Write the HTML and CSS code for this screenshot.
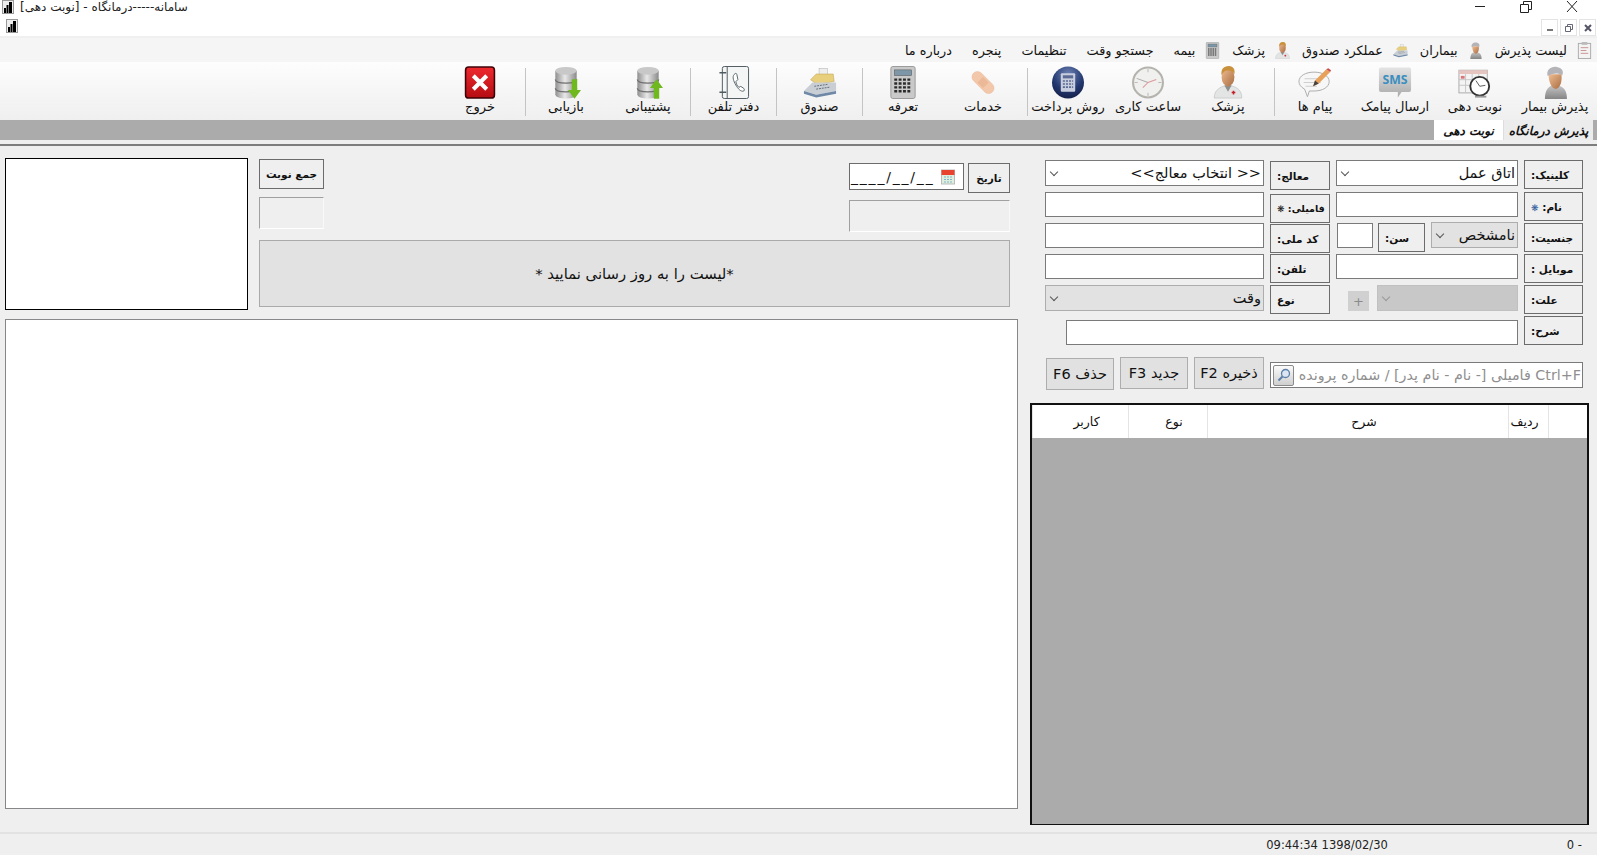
FILE: index.html
```html
<!DOCTYPE html>
<html lang="fa" dir="rtl">
<head>
    <meta charset="UTF-8">
    <title>سامانه-----درمانگاه - [نوبت دهی]</title>
    <link rel="stylesheet" href="styles.css">
</head>
<body>

<!-- shared icons -->
<svg class="sprite" xmlns="http://www.w3.org/2000/svg">
    <defs>
        <linearGradient id="gSkin" x1="0" y1="0" x2="1" y2="1"><stop offset="0" stop-color="#f0bd92"/><stop offset="1" stop-color="#a96c42"/></linearGradient>
        <linearGradient id="gGray" x1="0" y1="0" x2="0" y2="1"><stop offset="0" stop-color="#c6c6c6"/><stop offset="1" stop-color="#858585"/></linearGradient>
        <linearGradient id="gBubble" x1="0" y1="0" x2="0" y2="1"><stop offset="0" stop-color="#e4e4e4"/><stop offset="1" stop-color="#a9a9a9"/></linearGradient>
        <linearGradient id="gDb" x1="0" y1="0" x2="1" y2="0"><stop offset="0" stop-color="#8f8f8f"/><stop offset=".45" stop-color="#e8e8e8"/><stop offset="1" stop-color="#8a8a8a"/></linearGradient>
        <radialGradient id="gBall" cx=".5" cy=".25" r=".8"><stop offset="0" stop-color="#6f84b5"/><stop offset=".6" stop-color="#23386f"/><stop offset="1" stop-color="#121d45"/></radialGradient>
        <linearGradient id="gRed" x1="0" y1="0" x2="0" y2="1"><stop offset="0" stop-color="#ee2a30"/><stop offset="1" stop-color="#b50d12"/></linearGradient>
    </defs>
    <symbol id="i-nurse" viewBox="0 0 32 36">
        <path d="M5 36c0-9 3-13 8-15h6c7 2 10 6 10 15z" fill="url(#gGray)"/>
        <path d="M9 9h14c1 7-1 15-6 16-5 0-8-8-8-16z" fill="url(#gSkin)"/>
        <path d="M8 11C6 4 12 0 18 1c5 1 8 4 6 9-5-3-11-2-16 1z" fill="#b3b3b8"/>
    </symbol>
    <symbol id="i-schedule" viewBox="0 0 36 32">
        <rect x="1" y="3" width="30" height="24" fill="#f4f4f4" stroke="#aaa"/>
        <rect x="1" y="3" width="30" height="4" fill="#e6c4bf"/>
        <path d="M1 13h30M1 19h30M8 7v20M15 7v20M22 7v20" stroke="#c6c6c6" fill="none"/>
        <rect x="3" y="9" width="4" height="3" fill="#d77"/>
        <circle cx="23" cy="20" r="10" fill="#fff" stroke="#333" stroke-width="2"/>
        <path d="M23 20l-4-6M23 20l6-1" stroke="#555" fill="none"/>
        <path d="M18 31h12" stroke="#999" stroke-width="2"/>
    </symbol>
    <symbol id="i-message" viewBox="0 0 36 32">
        <path d="M17 5c9 0 16 4 16 10s-7 10-16 10l-5 0-2 6-3-8C3 21 1 18 1 15 1 9 8 5 17 5z" fill="#f7f7f7" stroke="#aaa"/>
        <path d="M7 12h15M6 16h18M8 20h12" stroke="#ccc" fill="none"/>
        <path d="M16 20l2-6L30 2l4 3-12 12z" fill="#e8a15a"/>
        <path d="M30 2l4 3 1-2-3-2z" fill="#c9484a"/>
        <path d="M16 20l2-6 4 3z" fill="#444"/>
    </symbol>
    <symbol id="i-doctor" viewBox="0 0 32 36">
        <path d="M1 35c0-8 5-11 10-13h10c6 2 10 5 10 13z" fill="#e3e5e5" stroke="#a8acac" stroke-width=".5"/>
        <path d="M12 21l4 7 4-7z" fill="#8e8e8e"/>
        <ellipse cx="16" cy="12" rx="7" ry="10" fill="url(#gSkin)"/>
        <path d="M9 10C8 4 11 0 17 0c5 0 7 4 6 9-1-2-3-4-7-4-4 0-5 2-7 5z" fill="#c9913b"/>
        <path d="M20 29h4M22 27v4" stroke="#c51f26" stroke-width="1.600"/>
    </symbol>
    <symbol id="i-clock" viewBox="0 0 32 32">
        <circle cx="16" cy="16" r="14.500" fill="#f0f0ee" stroke="#b4b3ad" stroke-width="2"/>
        <path d="M16 16L5 12" stroke="#aaa" fill="none"/>
        <path d="M16 16l-5 5M16 16l8-3" stroke="#d99" fill="none"/>
        <path d="M16 3v3M16 26v3M3 16h3M26 16h3" stroke="#bbb" fill="none"/>
    </symbol>
    <symbol id="i-payment" viewBox="0 0 32 32">
        <circle cx="16" cy="16" r="15.500" fill="url(#gBall)"/>
        <rect x="9" y="7" width="14" height="18" rx="1" fill="#c9cede"/>
        <rect x="11" y="9" width="10" height="3" fill="#5c6b93"/>
        <path d="M11 14.500h10M11 17.500h10M11 20.500h10" stroke="#5c6b93" stroke-width="1.500" stroke-dasharray="2 1"/>
    </symbol>
    <symbol id="i-bandage" viewBox="-5 -5 42 42">
        <g transform="rotate(45 16 16)">
            <rect x="-1" y="9" width="34" height="14" rx="7" fill="#f3c7a9" stroke="#e4b496" stroke-width=".5"/>
            <rect x="11" y="11" width="10" height="10" fill="#ecb998"/>
        </g>
    </symbol>
    <symbol id="i-calc" viewBox="0 0 26 34">
        <rect x=".5" y=".5" width="25" height="33" rx="2" fill="#c9c9c9" stroke="#999"/>
        <rect x="4" y="4" width="18" height="6" fill="#7d97a8" stroke="#555" stroke-width=".5"/>
        <path d="M4 14h18M4 18h18M4 22h18M4 26h18" stroke="#2b2b2b" stroke-width="2.400" stroke-dasharray="3 1.500"/>
    </symbol>
    <symbol id="i-register" viewBox="0 0 36 32">
        <rect x="17" y="1" width="9" height="8" fill="#eee" stroke="#aaa" stroke-width=".5"/>
        <path d="M8 13l6-6h18l1 8-18 3z" fill="#e8cf7d" stroke="#b59b4a" stroke-width=".5"/>
        <path d="M1 25l9-9 25 0v9L14 29z" fill="#c9ced4"/>
        <path d="M1 25l13 4 21-4v3L14 32 1 28z" fill="#6f88a6"/>
        <path d="M12 20l14-2M14 23l14-2" stroke="#5f6873" stroke-dasharray="2 1"/>
    </symbol>
    <symbol id="i-phonebook" viewBox="0 0 32 34">
        <rect x="4" y=".5" width="27" height="33" rx="2" fill="#f4f6f6" stroke="#4d5a60"/>
        <path d="M9 1v32" stroke="#4d5a60" fill="none"/>
        <path d="M1 7h7M1 27h7" stroke="#4d5a60" stroke-width="1.500"/>
        <path d="M17 8c-3 2-2 6 0 10s5 8 8 8c2 0 2-2 1-3l-3-2-2 1c-2-2-3-4-3-6l2-2-1-5c0-1-1-2-2-1z" fill="#fff" stroke="#59656a"/>
    </symbol>
    <symbol id="i-database" viewBox="0 0 24 34">
        <path d="M1 5v24c0 6 22 6 22 0V5z" fill="url(#gDb)"/>
        <ellipse cx="12" cy="5" rx="11" ry="4" fill="#c8c8c8"/>
        <path d="M1 14c0 5 22 5 22 0M1 23c0 5 22 5 22 0" stroke="#6f6f6f" fill="none" stroke-width="1.300"/>
    </symbol>
    <symbol id="i-exit" viewBox="0 0 30 32">
        <rect x="1" y="1" width="28" height="30" rx="3" fill="url(#gRed)" stroke="#3c0507" stroke-width="1.500"/>
        <path d="M8.500 9.500l13 13M21.500 9.500l-13 13" stroke="#fff" stroke-width="4"/>
    </symbol>
    <symbol id="i-clipboard" viewBox="0 0 14 18">
        <rect x=".5" y="1.500" width="13" height="16" fill="#f3f3f3" stroke="#aaa"/>
        <path d="M3 6h8M3 9h6M3 12h8" stroke="#c98f8f"/>
        <rect x="4" y="0" width="6" height="3" fill="#bbb"/>
    </symbol>
    <symbol id="i-appbars" viewBox="0 0 12 14">
        <rect x=".5" y=".5" width="11" height="13" fill="#eee" stroke="#999"/>
        <path d="M2 8h2v5H2zM4.500 5h2v8h-2zM7 2h3v11H7z" fill="#000"/>
    </symbol>
</svg>

<div class="app">
    <div class="titlebar">
        <svg class="app-icon"><use href="#i-appbars"/></svg>
        <span class="title-text">سامانه-----درمانگاه - [نوبت دهی]</span>
        <div class="win-buttons">
            <svg width="12" height="12" viewBox="0 0 12 12"><path d="M1 5.500h10" stroke="#222"/></svg>
            <svg width="12" height="12" viewBox="0 0 12 12"><path d="M.5 3.500h8v8h-8zM3.500 3.500v-3h8v8h-3" fill="none" stroke="#222"/></svg>
            <svg width="12" height="12" viewBox="0 0 12 12"><path d="M1 0l10 11M11 0L1 11" stroke="#222"/></svg>
        </div>
    </div>

    <div class="mdi-row">
        <svg class="app-icon mdi-icon"><use href="#i-appbars"/></svg>
        <div class="mdi-buttons">
            <span class="mdi-btn"><svg width="10" height="10" viewBox="0 0 10 10"><path d="M2 7h6" stroke="#777" stroke-width="2"/></svg></span>
            <span class="mdi-btn"><svg width="10" height="10" viewBox="0 0 10 10"><path d="M1.500 3.500h5v5h-5zM3.500 3V1.500h5v5H7" fill="none" stroke="#667"/></svg></span>
            <span class="mdi-btn"><svg width="10" height="10" viewBox="0 0 10 10"><path d="M2 2l6 6M8 2L2 8" stroke="#556" stroke-width="2"/></svg></span>
        </div>
    </div>

    <nav class="menubar">
        <svg class="menu-icon menu-icon-first"><use href="#i-clipboard"/></svg><span class="menu-item">لیست پذیرش</span>
        <svg class="menu-icon"><use href="#i-nurse"/></svg><span class="menu-item">بیماران</span>
        <svg class="menu-icon"><use href="#i-register"/></svg><span class="menu-item">عملکرد صندوق</span>
        <svg class="menu-icon"><use href="#i-doctor"/></svg><span class="menu-item">پزشک</span>
        <svg class="menu-icon"><use href="#i-calc"/></svg><span class="menu-item">بیمه</span>
        <span class="menu-item menu-plain">جستجو وقت</span>
        <span class="menu-item menu-plain">تنظیمات</span>
        <span class="menu-item menu-plain">پنجره</span>
        <span class="menu-item menu-plain">درباره ما</span>
    </nav>

    <div class="toolbar">
        <div class="tool"><svg class="tool-icon"><use href="#i-nurse"/></svg><span>پذیرش بیمار</span></div>
        <div class="tool"><svg class="tool-icon"><use href="#i-schedule"/></svg><span>نوبت دهی</span></div>
        <div class="tool">
            <svg class="tool-icon" viewBox="0 0 36 34">
                <path d="M3 1h30a2 2 0 0 1 2 2v22a2 2 0 0 1-2 2H25l-4 6v-6H3a2 2 0 0 1-2-2V3a2 2 0 0 1 2-2z" fill="url(#gBubble)"/>
                <text x="18" y="18.500" text-anchor="middle" class="sms-text">SMS</text>
            </svg>
            <span>ارسال پیامک</span>
        </div>
        <div class="tool"><svg class="tool-icon"><use href="#i-message"/></svg><span>پیام ها</span></div>
        <i class="tool-sep tool-sep-gap"></i>
        <div class="tool"><svg class="tool-icon"><use href="#i-doctor"/></svg><span>پزشک</span></div>
        <div class="tool"><svg class="tool-icon"><use href="#i-clock"/></svg><span>ساعت کاری</span></div>
        <div class="tool"><svg class="tool-icon"><use href="#i-payment"/></svg><span>روش پرداخت</span></div>
        <i class="tool-sep tool-sep-gap-sm"></i>
        <div class="tool"><svg class="tool-icon"><use href="#i-bandage"/></svg><span>خدمات</span></div>
        <div class="tool"><svg class="tool-icon"><use href="#i-calc"/></svg><span>تعرفه</span></div>
        <i class="tool-sep"></i>
        <div class="tool tool-md"><svg class="tool-icon"><use href="#i-register"/></svg><span>صندوق</span></div>
        <i class="tool-sep"></i>
        <div class="tool tool-md"><svg class="tool-icon"><use href="#i-phonebook"/></svg><span>دفتر تلفن</span></div>
        <i class="tool-sep"></i>
        <div class="tool tool-backup">
            <div class="db-icon"><svg class="tool-icon"><use href="#i-database"/></svg><svg class="db-arrow" viewBox="0 0 12 18"><path d="M6 0l6 8H8.500v10h-5V8H0z" fill="#6fb91f"/></svg></div>
            <span>پشتیبانی</span>
        </div>
        <div class="tool">
            <div class="db-icon"><svg class="tool-icon"><use href="#i-database"/></svg><svg class="db-arrow" viewBox="0 0 12 18"><path d="M6 18l6-8H8.500V0h-5v10H0z" fill="#6fb91f"/></svg></div>
            <span>بازیابی</span>
        </div>
        <i class="tool-sep"></i>
        <div class="tool tool-lg"><svg class="tool-icon"><use href="#i-exit"/></svg><span>خروج</span></div>
    </div>

    <div class="tabstrip">
        <div class="tab">پذیرش درمانگاه</div>
        <div class="tab tab-active">نوبت دهی</div>
    </div>
    <div class="tab-rule"></div>

    <div class="workspace">
        <!-- Patient form -->
        <section class="form-panel">
            <div class="patient-form">
                <label class="field-label">کلینیک:</label>
                <div class="combo"><span>اتاق عمل</span><i class="chev"></i></div>
                <label class="field-label nudge-1">معالج:</label>
                <div class="combo"><span>&lt;&lt; انتخاب معالج&gt;&gt;</span><i class="chev"></i></div>

                <label class="field-label"><span>نام: <b class="req req-blue">❋</b></span></label>
                <input class="text-input" type="text">
                <label class="field-label nudge-2 label-tight"><span>فامیلی: <b class="req">❋</b></span></label>
                <input class="text-input" type="text">

                <label class="field-label">جنسیت:</label>
                <div class="gender-row">
                    <div class="combo combo-light"><span>نامشخص</span><i class="chev"></i></div>
                    <label class="field-label age-label">سن:</label>
                    <input class="text-input age-input" type="text">
                </div>
                <label class="field-label nudge-1">کد ملی:</label>
                <input class="text-input" type="text">

                <label class="field-label">موبایل :</label>
                <input class="text-input" type="text">
                <label class="field-label">تلفن:</label>
                <input class="text-input" type="text">

                <label class="field-label">علت:</label>
                <div class="reason-row">
                    <div class="combo combo-disabled"><i class="chev"></i></div>
                    <span class="plus-btn">+</span>
                </div>
                <label class="field-label">نوع</label>
                <div class="combo combo-light"><span>وقت</span><i class="chev"></i></div>

                <label class="field-label">شرح:</label>
                <input class="text-input note-input" type="text">
            </div>

            <div class="search-row">
                <div class="search-box">
                    <input type="text" placeholder="Ctrl+F فامیلی [- نام - نام پدر] / شماره پرونده">
                    <span class="search-btn">
                        <svg width="14" height="14" viewBox="0 0 14 14"><circle cx="8.500" cy="5.500" r="4" fill="#dbe6f2" stroke="#5b7fa6" stroke-width="1.300"/><path d="M5.500 8.500L1.500 12.500" stroke="#5b7fa6" stroke-width="2"/></svg>
                    </span>
                </div>
                <button class="action-btn save-btn">ذخیره F2</button>
                <button class="action-btn">جدید F3</button>
                <button class="action-btn del-btn">حذف F6</button>
            </div>

            <div class="data-grid">
                <div class="grid-head">
                    <div class="col-blank"></div>
                    <div class="col-row">ردیف</div>
                    <div class="col-desc">شرح</div>
                    <div class="col-type">نوع</div>
                    <div class="col-user">کاربر</div>
                </div>
            </div>
        </section>

        <!-- Appointment list -->
        <section class="list-panel">
            <div class="list-top">
                <div class="list-info">
                    <div class="info-row">
                        <div class="date-col">
                            <div class="date-row">
                                <label class="field-label date-label">تاریخ</label>
                                <div class="date-input">
                                    <svg width="14" height="16" viewBox="0 0 14 16"><rect x=".5" y="1" width="13" height="14" fill="#dfeedd" stroke="#bbb"/><rect x=".5" y="1" width="13" height="5" fill="#e8432e"/><path d="M3 8h8M3 10.500h8M3 13h8" stroke="#7db7c9" stroke-dasharray="2 1"/></svg>
                                    <span dir="ltr">____/__/__</span>
                                </div>
                            </div>
                            <div class="sunken sunken-date"></div>
                        </div>
                        <div class="total-col">
                            <label class="field-label total-label">جمع نوبت</label>
                            <div class="sunken sunken-total"></div>
                        </div>
                    </div>
                    <div class="notice">*لیست را به روز رسانی نمایید *</div>
                </div>
                <div class="photo-box"></div>
            </div>
            <div class="list-box"></div>
        </section>
    </div>

    <footer class="statusbar">
        <span class="status-count">- 0</span>
        <span class="status-time">1398/02/30 09:44:34</span>
    </footer>
</div>

</body>
</html>
```

FILE: styles.css
```css
html, body {
    margin: 0;
    padding: 0;
}
body {
    font-family: "DejaVu Sans", sans-serif;
    font-size: 12px;
    color: #111;
    background-color: #efefef;
    overflow: hidden;
}
.sprite {
    position: absolute;
    width: 0;
    height: 0;
}
.app {
    width: 1597px;
    height: 855px;
    display: flex;
    flex-direction: column;
}

/* window chrome */
.titlebar {
    height: 14px;
    background: white;
    display: flex;
    direction: ltr;
    align-items: center;
    padding: 0 19px 0 2px;
}
.app-icon {
    width: 12px;
    height: 14px;
}
.title-text {
    direction: rtl;
    margin-left: 6px;
    font-size: 12px;
    color: #222;
    white-space: nowrap;
}
.win-buttons {
    margin-left: auto;
    display: flex;
    gap: 34px;
}
.mdi-row {
    height: 22px;
    background: white;
    display: flex;
    direction: ltr;
    align-items: flex-start;
    padding: 5px 1px 0 6px;
    box-sizing: border-box;
}
.mdi-buttons {
    margin-left: auto;
    display: flex;
    gap: 2px;
}
.mdi-btn {
    width: 17px;
    height: 17px;
    border: 1px solid #e4e4e4;
    box-sizing: border-box;
    display: flex;
    align-items: center;
    justify-content: center;
}
.menubar {
    height: 26px;
    background: #f5f5f5;
    border-top: 2px solid #f0f0f0;
    box-sizing: border-box;
    display: flex;
    align-items: center;
    padding-right: 5px;
    white-space: nowrap;
}
.menu-item {
    font-size: 12.8px;
    margin-right: 10px;
}
.menu-icon {
    width: 15px;
    height: 17px;
    margin-right: 12px;
}
.menu-icon-first {
    margin-right: 0;
}
.menu-plain {
    margin-right: 20px;
}
.toolbar {
    height: 58px;
    background: linear-gradient(#fdfdfd, #efefef);
    display: flex;
    padding-right: 2px;
    box-sizing: border-box;
}
.tool {
    width: 80px;
    flex: none;
    display: flex;
    flex-direction: column;
    align-items: center;
    padding-top: 4px;
    box-sizing: border-box;
    font-size: 13px;
    white-space: nowrap;
}
.tool-md {
    width: 85px;
}
.tool-backup {
    width: 84px;
}
.tool-lg {
    width: 90px;
}
.tool-icon {
    width: 34px;
    height: 33px;
    display: block;
}
.tool span {
    margin-top: 0;
}
.tool-sep {
    width: 1px;
    background: #c4c4c4;
    margin: 6px 0 4px 0;
    flex: none;
}
.tool-sep-gap {
    margin-left: 6px;
}
.tool-sep-gap-sm {
    margin-left: 4px;
}
.db-icon {
    position: relative;
}
.db-arrow {
    position: absolute;
    right: 2px;
    bottom: 0;
    width: 13px;
    height: 20px;
}
.sms-text {
    font-family: "Open Sans", sans-serif;
    font-size: 13px;
    font-weight: 700;
    fill: #3a8fc0;
}

/* tabs */
.tabstrip {
    height: 20px;
    background: #ababab;
    display: flex;
    padding-right: 4px;
}
.tab {
    width: 90px;
    height: 21px;
    background: #ececec;
    font-size: 12px;
    font-weight: bold;
    font-style: italic;
    text-align: center;
    line-height: 23px;
    box-sizing: border-box;
    white-space: nowrap;
    border-left: 1px solid #ddd;
}
.tab-active {
    width: 69px;
    background: white;
    border-left: none;
}
.tab-rule {
    height: 6px;
    border-bottom: 2px solid #7d7d7d;
    box-sizing: border-box;
    background: #efefef;
}

.workspace {
    flex: 1;
    display: flex;
    gap: 12px;
    padding-top: 12px;
    min-height: 0;
    box-sizing: border-box;
}

/* form panel */
.form-panel {
    width: 567px;
    flex: none;
    display: flex;
    flex-direction: column;
    padding-top: 2px;
    box-sizing: border-box;
}
.patient-form {
    margin-right: 14px;
    display: grid;
    grid-template-columns: 59px 182px 60px 219px;
    grid-template-rows: 32px 31px 31px 31px 31px 29px;
    column-gap: 6px;
    align-items: start;
}
.field-label {
    height: 29px;
    border: 1px solid #6c6c6c;
    box-sizing: border-box;
    display: flex;
    align-items: center;
    justify-content: flex-end;
    padding-left: 6px;
    font-size: 10.5px;
    font-weight: bold;
    white-space: nowrap;
}
.label-tight {
    font-size: 9.5px;
}
.nudge-1 {
    margin-top: 1px;
}
.nudge-2 {
    margin-top: 2px;
}
.req {
    font-weight: normal;
    font-size: 9px;
}
.req-blue {
    color: #2a5a9a;
}
.text-input {
    height: 25px;
    width: 100%;
    border: 1px solid #7a7a7a;
    background: white;
    box-sizing: border-box;
    padding: 0;
    margin: 0;
}
.combo {
    height: 26px;
    background: white;
    border: 1px solid #7a7a7a;
    box-sizing: border-box;
    display: flex;
    align-items: center;
    justify-content: space-between;
    padding: 0 2px 0 4px;
    font-size: 14.5px;
    white-space: nowrap;
}
.combo-light {
    background: #e2e2e2;
    border-color: #adadad;
}
.combo-disabled {
    background: #c8c8c8;
    border-color: #c0c0c0;
    justify-content: flex-end;
}
.chev {
    width: 5px;
    height: 5px;
    border-right: 1px solid #555;
    border-bottom: 1px solid #555;
    transform: rotate(45deg);
    margin: 0 0 3px 1px;
    flex: none;
}
.combo-disabled .chev {
    border-color: #999;
}
.gender-row {
    display: flex;
}
.gender-row .combo {
    width: 87px;
    flex: none;
    margin-top: -1px;
}
.age-label {
    width: 47px;
    flex: none;
    margin-right: 6px;
}
.age-input {
    width: 36px;
    flex: none;
    margin-right: 5px;
}
.reason-row {
    display: flex;
}
.reason-row .combo {
    width: 141px;
    flex: none;
}
.plus-btn {
    width: 21px;
    height: 20px;
    margin: 6px 8px 0 0;
    background: #d0d0d0;
    color: #8a8a8a;
    display: flex;
    align-items: center;
    justify-content: center;
    font-size: 13px;
    flex: none;
}
.note-input {
    grid-column: 2 / -1;
    width: 452px;
    margin-top: 4px;
}
.search-row {
    margin: 12px 14px 0 0;
    display: flex;
    gap: 6px;
    height: 33px;
    align-items: flex-start;
}
.search-box {
    width: 313px;
    height: 26px;
    margin-top: 5px;
    flex: none;
    background: white;
    border: 1px solid #7a7a7a;
    box-sizing: border-box;
    display: flex;
    align-items: center;
    padding-left: 2px;
}
.search-box input {
    flex: 1;
    min-width: 0;
    border: none;
    outline: none;
    padding: 0 1px 0 0;
    font-family: "DejaVu Sans", sans-serif;
    font-size: 14.3px;
    background: transparent;
}
.search-box input::placeholder {
    color: #8f8f8f;
}
.search-btn {
    width: 21px;
    height: 21px;
    border: 1px solid #8a8a8a;
    border-radius: 2px;
    box-sizing: border-box;
    background: linear-gradient(#fbfbfb, #cfcfcf);
    display: flex;
    align-items: center;
    justify-content: center;
    flex: none;
}
.action-btn {
    width: 68px;
    height: 32px;
    padding: 0;
    flex: none;
    background: #e1e1e1;
    border: 1px solid #adadad;
    font-family: "DejaVu Sans", sans-serif;
    font-size: 14.5px;
    color: #111;
    white-space: nowrap;
}
.save-btn {
    width: 70px;
}
.del-btn {
    margin-top: 1px;
}
.data-grid {
    margin: 13px 8px 7px 0;
    flex: 1;
    background: #ababab;
    border: 2px solid #111;
    border-bottom-width: 1px;
    box-sizing: border-box;
}
.grid-head {
    height: 33px;
    background: white;
    display: grid;
    grid-template-columns: 39px 40px 301px 79px 1fr;
    text-align: center;
    font-size: 12.5px;
    line-height: 33px;
}
.grid-head div {
    border-left: 1px solid #e4e4e4;
}
.grid-head .col-row {
    padding-right: 8px;
}
.grid-head .col-desc,
.grid-head .col-type,
.grid-head .col-user {
    padding-left: 12px;
}

/* list panel */
.list-panel {
    width: 1013px;
    flex: none;
    display: flex;
    flex-direction: column;
    gap: 9px;
    padding-bottom: 23px;
    box-sizing: border-box;
}
.list-top {
    display: flex;
    height: 152px;
    gap: 11px;
}
.photo-box {
    width: 243px;
    flex: none;
    background: white;
    border: 1px solid #000;
    box-sizing: border-box;
}
.list-info {
    flex: 1;
    margin-right: 8px;
    display: flex;
    flex-direction: column;
    padding-top: 1px;
}
.info-row {
    height: 81px;
    display: flex;
    justify-content: space-between;
}
.date-col {
    width: 161px;
    padding-top: 4px;
}
.date-row {
    display: flex;
    gap: 4px;
}
.date-label {
    width: 42px;
    height: 30px;
    flex: none;
    justify-content: center;
    padding: 0;
}
.date-input {
    width: 115px;
    height: 27px;
    background: white;
    border: 1px solid #6c6c6c;
    box-sizing: border-box;
    display: flex;
    align-items: center;
    justify-content: space-between;
    padding: 0 8px 0 1px;
    font-size: 14px;
    letter-spacing: 1.8px;
}
.sunken {
    background: #efefef;
    border-top: 1px solid #a0a0a0;
    border-left: 1px solid #a0a0a0;
    border-right: 1px solid #f8f8f8;
    border-bottom: 1px solid white;
    box-sizing: border-box;
    height: 32px;
}
.sunken-date {
    margin-top: 7px;
}
.total-col {
    width: 65px;
}
.total-label {
    height: 30px;
    width: 65px;
    padding: 0;
    justify-content: center;
}
.sunken-total {
    margin-top: 8px;
}
.notice {
    height: 67px;
    background: #e2e2e2;
    border: 1px solid #aaa;
    box-sizing: border-box;
    display: flex;
    align-items: center;
    justify-content: center;
    font-size: 14.8px;
}
.list-box {
    flex: 1;
    background: white;
    border: 1px solid #87878a;
    box-sizing: border-box;
}

.statusbar {
    height: 23px;
    border-top: 2px solid #e2e2e2;
    box-sizing: border-box;
    display: flex;
    align-items: center;
    padding-right: 15px;
    font-size: 11.5px;
    color: #222;
}
.status-time {
    margin-right: 179px;
}
```
